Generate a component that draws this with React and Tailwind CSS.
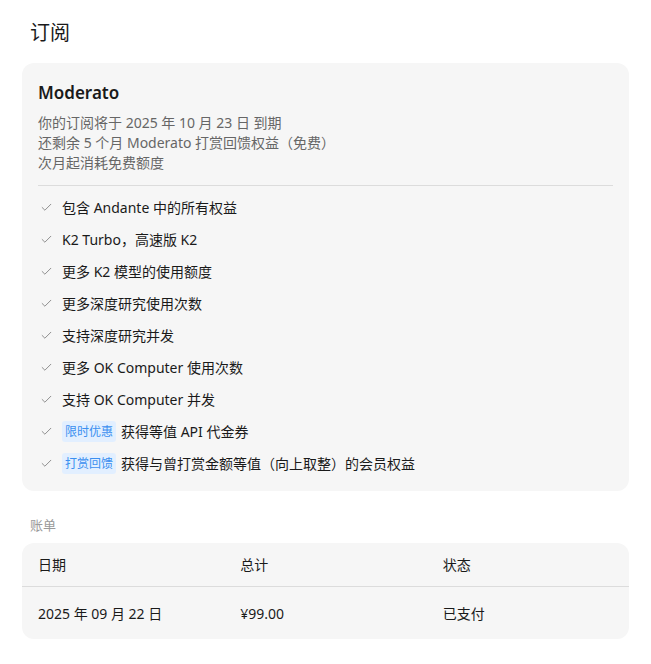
import React from 'react';
import { Check } from 'lucide-react';

const font = { fontFamily: '"Noto Sans", "Noto Sans CJK SC", sans-serif' };

const benefits = [
  { text: '包含 Andante 中的所有权益' },
  { text: 'K2 Turbo，高速版 K2' },
  { text: '更多 K2 模型的使用额度' },
  { text: '更多深度研究使用次数' },
  { text: '支持深度研究并发' },
  { text: '更多 OK Computer 使用次数' },
  { text: '支持 OK Computer 并发' },
  { tag: '限时优惠', text: '获得等值 API 代金券' },
  { tag: '打赏回馈', text: '获得与曾打赏金额等值（向上取整）的会员权益' },
];

export default function App() {
  return (
    <div className="min-h-[664px] w-[651px] bg-white px-[22px] pt-[19px] text-[#1a1a1a]" style={font}>
      <h1 className="pl-2 text-[20px] leading-[28px] text-[#1a1a1a]">订阅</h1>

      <div className="mt-4 rounded-xl bg-[#f6f6f6] px-4 pt-[17px] pb-[12px]">
        <h2 className="text-[17px] font-semibold leading-[26px]">Moderato</h2>
        <div className="mt-[7px] text-[14px] leading-[20px] text-[#666666]">
          <p>你的订阅将于 2025 年 10 月 23 日 到期</p>
          <p>还剩余 5 个月 Moderato 打赏回馈权益（免费）</p>
          <p>次月起消耗免费额度</p>
        </div>
        <div className="mt-[12px] border-t border-[#dcdcdc]" />
        <ul className="mt-[5px]">
          {benefits.map((b, i) => (
            <li key={i} className="flex h-[32px] items-center text-[14px]">
              <Check className="ml-[2px] mr-[9px] h-[13px] w-[13px] text-[#777777]" strokeWidth={1.5} />
              {b.tag && (
                <span className="mr-[5px] rounded-[3px] bg-[#e2efff] px-[3px] text-[12px] leading-[21px] text-[#3b8ff0]">
                  {b.tag}
                </span>
              )}
              <span>{b.text}</span>
            </li>
          ))}
        </ul>
      </div>

      <div className="mt-[24px] pl-2 text-[13px] leading-[20px] text-[#9a9a9a]">账单</div>

      <div className="mt-[8px] overflow-hidden rounded-xl bg-[#f6f6f6] text-[14px]">
        <div className="grid h-[44px] grid-cols-3 items-center border-b border-[#dcdcdc]">
          <div className="px-4">日期</div>
          <div className="px-4">总计</div>
          <div className="px-4">状态</div>
        </div>
        <div className="grid h-[52px] grid-cols-3 items-center">
          <div className="px-4">2025 年 09 月 22 日</div>
          <div className="px-4">¥99.00</div>
          <div className="px-4">已支付</div>
        </div>
      </div>
    </div>
  );
}
